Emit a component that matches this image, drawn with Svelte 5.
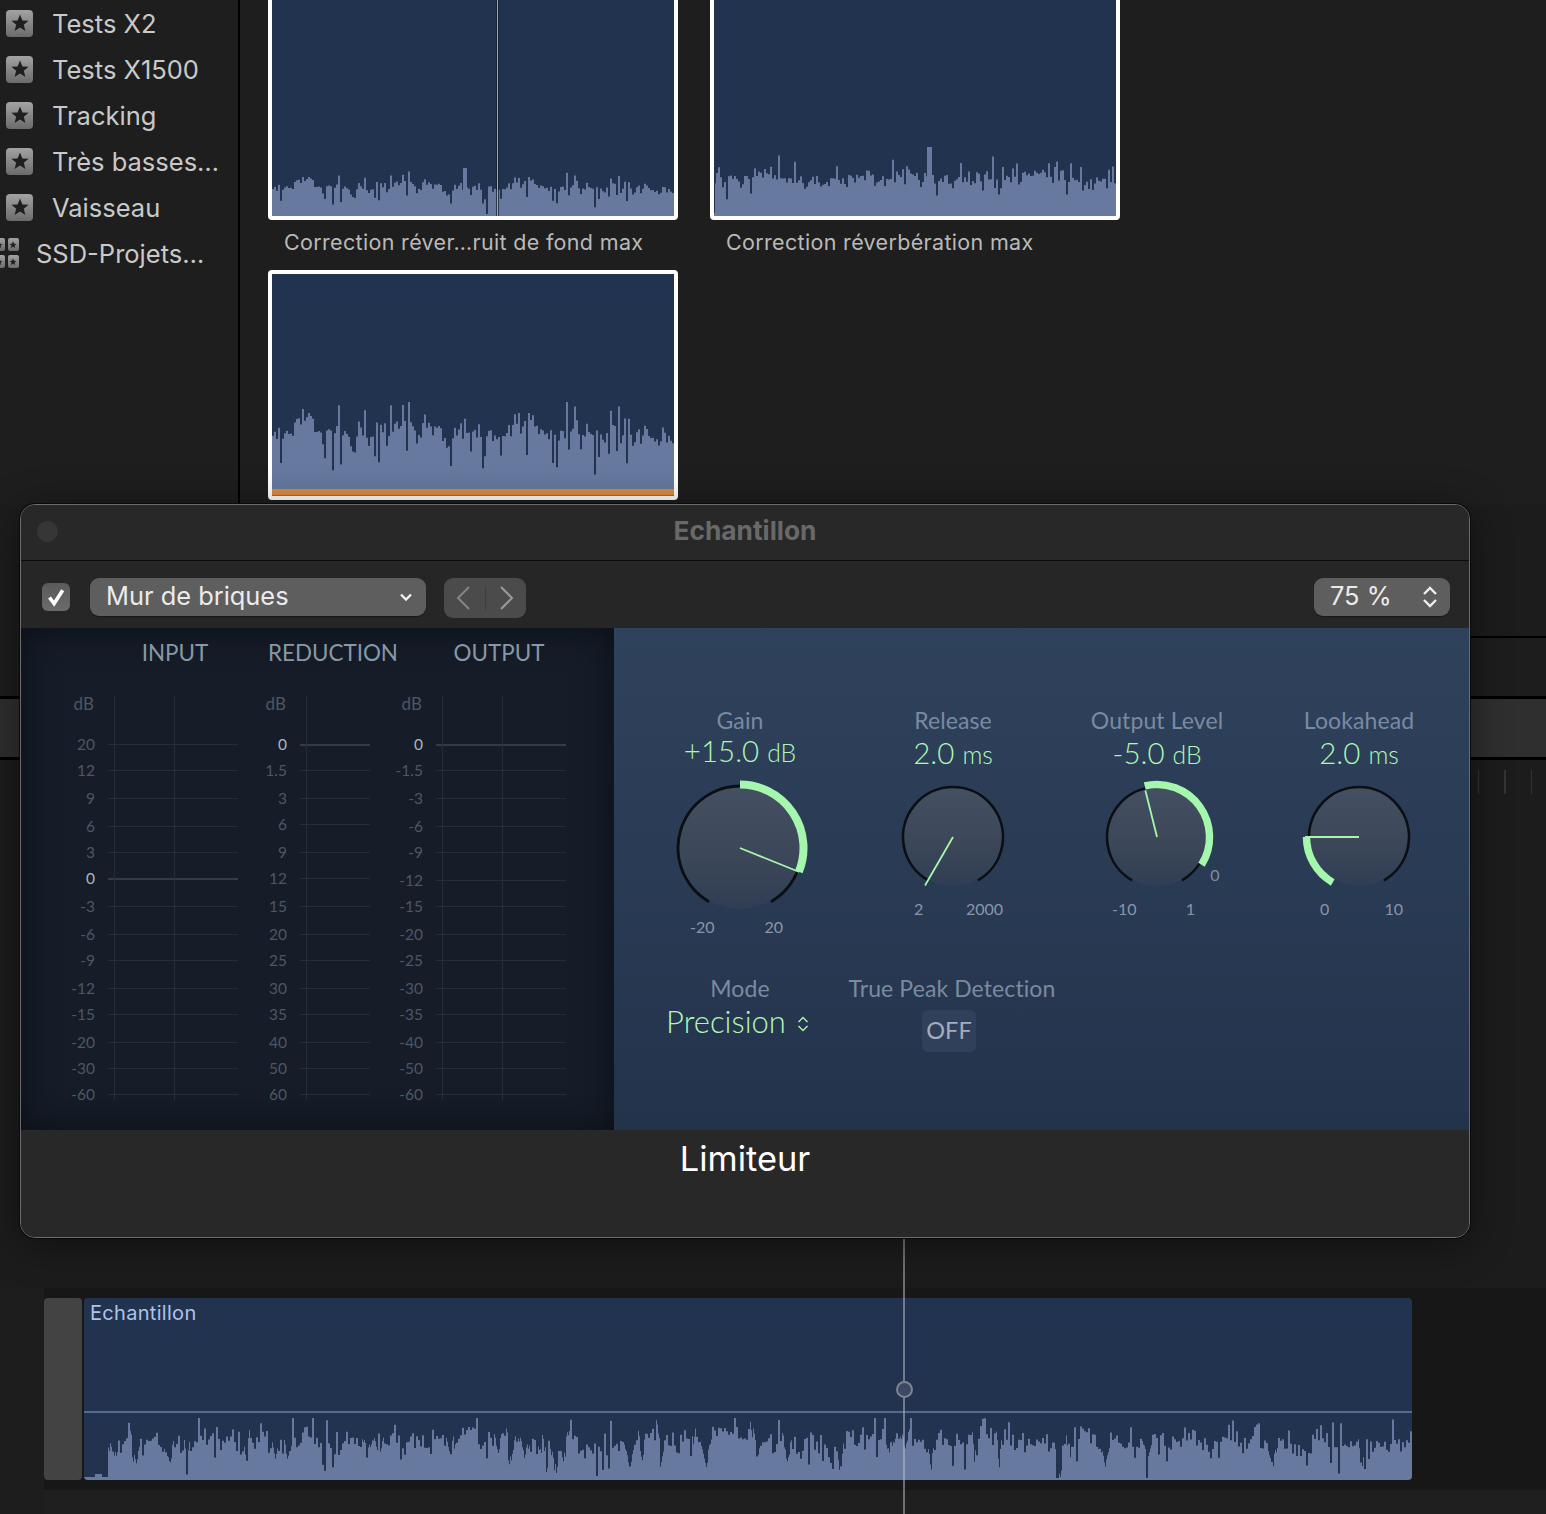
<script lang="ts">
	const sidebarItems = ['Tests X2', 'Tests X1500', 'Tracking', 'Très basses…', 'Vaisseau'];

	// seeded so the waveforms stay the same between runs
	function makeRandom(seed: number) {
		let s = seed;
		return () => {
			s = (s * 16807) % 2147483647;
			return (s - 1) / 2147483646;
		};
	}

	function wave(opts: {
		seed: number;
		w: number;
		h: number;
		mean: number;
		jitter: number;
		peak: number;
		dip: number;
		notch?: number;
		start?: number;
		blocks?: number[][];
		cuts?: number[][];
	}) {
		const rand = makeRandom(opts.seed);
		const start = opts.start ?? 0;
		let d = `M0 ${opts.h}`;
		let drift = 0;
		let body = 0;
		let notchLeft = 0;
		let notchLen = 1;
		let notchDepth = 0;
		for (let x = 0; x < opts.w; x++) {
			if (x % 2 === 0) {
				drift = drift * 0.8 + (rand() - 0.5) * opts.jitter * 0.9;
				body = opts.mean + drift + (rand() - 0.5) * opts.jitter;
				const r = rand();
				if (r < 0.16) body += rand() * opts.peak;
				else if (r < 0.3) body -= rand() * opts.dip;
				if (notchLeft <= 0 && rand() < (opts.notch ?? 0)) {
					notchLen = notchLeft = 4 + Math.floor(rand() * 8);
					notchDepth = opts.dip * (0.5 + rand() * 0.6);
				}
			}
			let v = x < start ? (x > 10 && x < 18 ? 6 : 3) : body;
			if (notchLeft > 0 && x >= start) {
				v -= notchDepth * (1 - Math.abs(notchLeft / notchLen - 0.5) * 2);
				notchLeft--;
			}
			for (const [bx, bw, bh] of opts.blocks ?? []) {
				if (x >= bx && x < bx + bw) v = bh;
			}
			for (const [cx, cw, ch] of opts.cuts ?? []) {
				if (x >= cx && x < cx + cw) v = ch;
			}
			v = Math.max(v, 2);
			d += `L${x} ${opts.h - v}L${x + 1} ${opts.h - v}`;
		}
		return d + `L${opts.w} ${opts.h}Z`;
	}

	const waveOne = wave({ seed: 4711, w: 402, h: 50, mean: 29, jitter: 8, peak: 11, dip: 15, blocks: [[191, 4, 48]], cuts: [[214, 2, 2]] });
	const waveTwo = wave({ seed: 991, w: 402, h: 72, mean: 38, jitter: 9, peak: 20, dip: 16, blocks: [[213, 5, 69]], cuts: [[0, 1, 3]] });
	const waveThree = wave({ seed: 4711, w: 402, h: 94, mean: 64, jitter: 15, peak: 26, dip: 34 });
	const waveClip = wave({ seed: 20231, w: 1328, h: 62, mean: 38, jitter: 14, peak: 19, dip: 24, notch: 0.07, start: 24 });

	const ys = [745, 771, 799, 827, 853, 879, 907, 935, 961, 989, 1015, 1043, 1069, 1095];
	const meters = [
		{
			name: 'INPUT',
			labelW: 73,
			lineW: 130,
			gap: 8,
			nameShift: 4,
			strong: 5,
			labels: ['20', '12', '9', '6', '3', '0', '-3', '-6', '-9', '-12', '-15', '-20', '-30', '-60'],
			ys,
			verticals: [6, 66]
		},
		{
			name: 'REDUCTION',
			labelW: 41,
			lineW: 70,
			gap: 12,
			nameShift: -4,
			strong: 0,
			labels: ['0', '1.5', '3', '6', '9', '12', '15', '20', '25', '30', '35', '40', '50', '60'],
			ys: ys.map((y, i) => (i === 3 ? 825 : y)),
			verticals: [6]
		},
		{
			name: 'OUTPUT',
			labelW: 41,
			lineW: 130,
			gap: 0,
			nameShift: -4,
			strong: 0,
			labels: ['0', '-1.5', '-3', '-6', '-9', '-12', '-15', '-20', '-25', '-30', '-35', '-40', '-50', '-60'],
			ys: ys.map((y, i) => (i === 5 ? 881 : y)),
			verticals: [6, 66]
		}
	];

	const knobs = [
		{ title: 'Gain', value: '+15.0', unit: 'dB', r: 62, ring: 2.8, cx: 80, cy: 70, w: 160, h: 140, from: 0, to: 112, pointer: 112, len: 64, arcW: 8, arcR: 63.5, min: '-20', max: '20', pl: 30, pr: 37, ml: 0, lift: 2, after: 8 },
		{ title: 'Release', value: '2.0', unit: 'ms', r: 50, ring: 2.6, cx: 80, cy: 58, w: 160, h: 121, from: 0, to: 0, pointer: -150, len: 56, arcW: 0, arcR: 0, min: '2', max: '2000', pl: 41, pr: 30, ml: 53, lift: 0, after: 7 },
		{ title: 'Output Level', value: '-5.0', unit: 'dB', r: 50, ring: 2.6, cx: 80, cy: 58, w: 160, h: 121, from: -13.5, to: 122, pointer: -14, len: 48, arcW: 7.5, arcR: 52.5, min: '-10', max: '1', pl: 35, pr: 42, ml: 44, lift: 0, after: 7 },
		{ title: 'Lookahead', value: '2.0', unit: 'ms', r: 50, ring: 2.6, cx: 80, cy: 58, w: 160, h: 121, from: -150, to: -90, pointer: -90, len: 54, arcW: 7.5, arcR: 52.5, min: '0', max: '10', pl: 41, pr: 36, ml: 42, lift: 0, after: 7 }
	];

	function polar(cx: number, cy: number, r: number, deg: number) {
		const a = ((deg - 90) * Math.PI) / 180;
		return [cx + r * Math.cos(a), cy + r * Math.sin(a)];
	}

	function arc(cx: number, cy: number, r: number, from: number, to: number) {
		const [x1, y1] = polar(cx, cy, r, from);
		const [x2, y2] = polar(cx, cy, r, to);
		const large = to - from > 180 ? 1 : 0;
		return `M${x1} ${y1}A${r} ${r} 0 ${large} 1 ${x2} ${y2}`;
	}
</script>

{#snippet star()}
	<svg class="star" viewBox="0 0 20 20">
		<polygon points="10,1.5 12.4,7.4 18.6,7.8 13.8,11.8 15.4,18 10,14.6 4.6,18 6.2,11.8 1.4,7.8 7.6,7.4" />
	</svg>
{/snippet}

<div class="app">
	<section class="browser">
		<nav class="sidebar">
			{#each sidebarItems as item}
				<div class="side-row">
					<span class="chip">{@render star()}</span>
					<span>{item}</span>
				</div>
			{/each}
			<div class="side-row library">
				<span class="chip-group">
					{#each [0, 1, 2, 3] as i (i)}
						<span class="chip small">{@render star()}</span>
					{/each}
				</span>
				<span>SSD-Projets…</span>
			</div>
		</nav>
		<div class="thumbs">
			<figure class="thumb">
				<div class="thumb-frame">
					<span class="frame-playhead"></span>
					<svg class="wave" width="402" height="50"><path d={waveOne} /></svg>
				</div>
				<figcaption>Correction réver…ruit de fond max</figcaption>
			</figure>
			<figure class="thumb">
				<div class="thumb-frame">
					<svg class="wave" width="402" height="72"><path d={waveTwo} /></svg>
				</div>
				<figcaption>Correction réverbération max</figcaption>
			</figure>
			<figure class="thumb">
				<div class="thumb-frame">
					<svg class="wave" width="402" height="94"><path d={waveThree} /></svg>
					<span class="orange-bar"></span>
				</div>
			</figure>
		</div>
	</section>

	<section class="lanes">
		<div class="lane-head"></div>
		<div class="lane-band"></div>
		<div class="lane-ruler">
			<i></i><i></i><i></i>
		</div>
	</section>

	<section class="track">
		<div class="clip-handle"></div>
		<div class="clip">
			<span class="clip-name">Echantillon</span>
			<span class="clip-level"></span>
			<svg class="wave" width="1328" height="62"><path d={waveClip} /></svg>
		</div>
	</section>
	<div class="track-foot"></div>

	<div class="playhead"><span></span></div>

	<div class="window">
		<header class="titlebar">
			<span class="close-dot"></span>
			<span class="title">Echantillon</span>
		</header>

		<div class="toolbar">
			<span class="checkbox">
				<svg viewBox="0 0 28 28" width="28" height="28">
					<path d="M7.5 14.5l4.6 6.2 8.6-13.4" fill="none" stroke="#fff" stroke-width="3.6" />
				</svg>
			</span>
			<div class="select preset">
				<span>Mur de briques</span>
				<svg viewBox="0 0 16 16" width="16" height="16">
					<path d="M3 5.5l5 5 5-5" fill="none" stroke="#eee" stroke-width="2.4" />
				</svg>
			</div>
			<div class="nav-buttons">
				<svg viewBox="0 0 20 28" width="20" height="28">
					<path d="M16 3L5 14l11 11" fill="none" stroke="#858585" stroke-width="2" />
				</svg>
				<span class="nav-sep"></span>
				<svg viewBox="0 0 20 28" width="20" height="28">
					<path d="M4 3l11 11L4 25" fill="none" stroke="#9a9a9a" stroke-width="2" />
				</svg>
			</div>
			<div class="select zoom">
				<span>75 %</span>
				<svg viewBox="0 0 18 28" width="18" height="28">
					<path d="M3 11l6-6 6 6M3 17l6 6 6-6" fill="none" stroke="#eee" stroke-width="2.4" />
				</svg>
			</div>
		</div>

		<div class="plugin">
			<div class="meters">
				{#each meters as m}
					<div class="meter" style="margin-right:{m.gap}px">
						<div class="meter-name" style="padding-left:{m.labelW + 13 + m.nameShift}px;width:{m.lineW - m.nameShift}px">{m.name}</div>
						<div class="scale">
							{#each m.verticals as v}
								<span class="vertical" style="left:{m.labelW + 13 + v}px"></span>
							{/each}
							<div class="tick" style="height:41px">
								<span class="tick-label db" style="width:{m.labelW - 1}px">dB</span>
							</div>
							{#each m.labels as label, i}
								<div class="tick" style="height:{i < 13 ? m.ys[i + 1] - m.ys[i] : 12}px">
									<span class="tick-label" class:strong={i === m.strong} style="width:{m.labelW}px">{label}</span>
									<span class="tick-line" class:strong={i === m.strong} style="width:{m.lineW}px"></span>
								</div>
							{/each}
						</div>
					</div>
				{/each}
			</div>

			<div class="controls">
				<div class="knob-row">
					{#each knobs as k, i}
						<div class="knob" style="margin-left:{k.ml}px">
							<div class="knob-title">{k.title}</div>
							<div class="knob-value" style="margin-top:{-k.lift}px;margin-bottom:{k.after}px">{k.value} <small>{k.unit}</small></div>
							<svg class="dial" width={k.w} height={k.h}>
								<defs>
									<linearGradient id="disc-{i}" x1="0" y1="0" x2="0" y2="1">
										<stop offset="0" stop-color="#444f61" />
										<stop offset="0.6" stop-color="#3b4658" />
										<stop offset="1" stop-color="#303d54" />
									</linearGradient>
								</defs>
								<circle cx={k.cx} cy={k.cy} r={k.r - 1} fill="url(#disc-{i})" />
								<path d={arc(k.cx, k.cy, k.r, -150, 150)} fill="none" stroke="#0b0e13" stroke-width={k.ring} />
								{#if k.arcW}
									<path d={arc(k.cx, k.cy, k.arcR, k.from, k.to)} fill="none" stroke="#a6f7ae" stroke-width={k.arcW} />
								{/if}
								<line
									x1={k.cx}
									y1={k.cy}
									x2={polar(k.cx, k.cy, k.len, k.pointer)[0]}
									y2={polar(k.cx, k.cy, k.len, k.pointer)[1]}
									stroke="#a6f7ae"
									stroke-width="1.8"
								/>
								{#if k.title === 'Output Level'}
									<text x={k.cx + 58} y={k.cy + 44} text-anchor="middle" class="knob-zero">0</text>
								{/if}
							</svg>
							<div class="limits" style="padding-left:{k.pl}px;padding-right:{k.pr}px">
								<span>{k.min}</span>
								<span>{k.max}</span>
							</div>
						</div>
					{/each}
				</div>

				<div class="option-row">
					<div class="option mode">
						<div class="knob-title">Mode</div>
						<div class="mode-value">
							<span>Precision</span>
							<svg viewBox="0 0 14 20" width="14" height="20">
								<path d="M2.5 8l4.5-4.5L11.500 8M2.500 12l4.500 4.500 4.500-4.500" fill="none" stroke="#a6f7ae" stroke-width="1.4" />
							</svg>
						</div>
					</div>
					<div class="option peak">
						<div class="knob-title">True Peak Detection</div>
						<div class="off-button">OFF</div>
					</div>
				</div>
			</div>
		</div>

		<footer class="plugin-name">Limiteur</footer>
	</div>
</div>

<style>
	:global(body) {
		margin: 0;
		background: #1d1d1d;
	}

	.app {
		position: relative;
		width: 1546px;
		height: 1514px;
		overflow: hidden;
		display: flex;
		flex-direction: column;
		background: #1d1d1d;
		font-family: Inter, 'Liberation Sans', sans-serif;
	}

	.browser {
		display: flex;
		height: 505px;
		flex: none;
		overflow: hidden;
		background: #1e1e1e;
	}

	.sidebar {
		width: 238px;
		flex: none;
		border-right: 2px solid #000;
		color: #c9c9c9;
		font-size: 25.500px;
	}

	.side-row {
		display: flex;
		align-items: center;
		gap: 19px;
		height: 46px;
		padding-left: 6px;
		white-space: nowrap;
	}

	.chip {
		display: flex;
		align-items: center;
		justify-content: center;
		width: 27px;
		height: 27px;
		border-radius: 4px;
		background: linear-gradient(#a3a3a3, #6b6b6b);
	}

	.chip.small {
		width: 11px;
		height: 13px;
		border-radius: 2px;
	}

	.chip-group {
		display: grid;
		grid-template-columns: 11px 11px;
		gap: 4px 3px;
	}

	.library {
		padding-left: 0;
		margin-left: -6px;
		gap: 17px;
	}

	.star {
		width: 74%;
		height: 74%;
		fill: #1f1f1f;
	}

	.thumbs {
		display: grid;
		grid-template-columns: 410px 410px;
		grid-auto-rows: 230px;
		gap: 50px 32px;
		margin: -10px 0 0 28px;
	}

	.thumb {
		margin: 0;
		position: relative;
	}

	.thumb-frame {
		position: relative;
		box-sizing: border-box;
		height: 230px;
		display: flex;
		flex-direction: column;
		justify-content: flex-end;
		border: 4px solid #fff;
		border-radius: 4px;
		background: #22334f;
		overflow: hidden;
	}

	.thumb figcaption {
		padding-left: 16px;
		height: 50px;
		line-height: 45px;
		color: #b9b9b9;
		font-size: 21.500px;
		letter-spacing: 0.33px;
		white-space: nowrap;
	}

	.wave {
		display: block;
		flex: none;
		fill: #67799f;
	}

	.frame-playhead {
		position: absolute;
		left: 225px;
		top: 0;
		bottom: 0;
		width: 1px;
		background: #9aa4b8;
		box-shadow: 0 0 0 1px rgba(20, 28, 44, 0.7);
	}

	.orange-bar {
		position: absolute;
		left: 0;
		right: 0;
		bottom: 1px;
		height: 6px;
		border-radius: 1px;
		background: #e08b3e;
	}

	.lanes {
		flex: none;
		height: 783px;
		display: flex;
		flex-direction: column;
	}

	.lane-head {
		flex: none;
		height: 131px;
		margin-left: 900px;
		border-bottom: 2px solid #000;
		background: #1c1c1c;
	}

	.lane-band {
		flex: none;
		margin-top: 58px;
		height: 58px;
		border-top: 3px solid #000;
		border-bottom: 3px solid #000;
		background: #2f2f2f;
	}

	.lane-ruler {
		flex: 1;
		background: #1c1c1c;
		display: flex;
		justify-content: flex-end;
		gap: 25px;
		padding: 10px 14px 0 0;
	}

	.lane-ruler i {
		width: 1.500px;
		height: 24px;
		background: #333;
	}

	.track {
		flex: none;
		display: flex;
		align-items: flex-start;
		gap: 2px;
		height: 202px;
		margin-left: 44px;
		padding-top: 10px;
		box-sizing: border-box;
		background: #171717;
	}

	.clip-handle {
		width: 38px;
		height: 182px;
		border-radius: 4px;
		background: #434343;
	}

	.clip {
		position: relative;
		width: 1328px;
		height: 182px;
		display: flex;
		flex-direction: column;
		justify-content: flex-end;
		border-radius: 4px;
		background: #22334f;
		overflow: hidden;
	}

	.clip-name {
		position: absolute;
		left: 6px;
		top: 3px;
		color: #adc3ea;
		font-size: 20px;
		letter-spacing: 0.3px;
	}

	.clip-level {
		position: absolute;
		left: 0;
		right: 0;
		top: 113px;
		height: 2px;
		background: #56698f;
	}

	.track-foot {
		flex: 1;
		margin-left: 44px;
		background: #1f1f1f;
	}

	.playhead {
		position: absolute;
		left: 903px;
		top: 1238px;
		bottom: 0;
		width: 2px;
		background: rgba(190, 196, 210, 0.5);
	}

	.playhead span {
		position: absolute;
		left: -7.500px;
		top: 143px;
		width: 13px;
		height: 13px;
		border: 2px solid #7d8494;
		border-radius: 50%;
		background: #3e4860;
	}

	.window {
		position: absolute;
		left: 20px;
		top: 504px;
		width: 1450px;
		height: 734px;
		box-sizing: border-box;
		display: flex;
		flex-direction: column;
		border: 1px solid #6c6c6c;
		border-radius: 15px;
		overflow: hidden;
		background: #272727;
		box-shadow: 0 0 0 1px #0a0a0a, 0 6px 40px rgba(0, 0, 0, 0.45);
	}

	.titlebar {
		flex: none;
		position: relative;
		height: 55px;
		padding-bottom: 5px;
		box-sizing: border-box;
		display: flex;
		align-items: center;
		justify-content: center;
		background: #282828;
	}

	.close-dot {
		position: absolute;
		left: 16px;
		top: 16px;
		width: 21px;
		height: 21px;
		border-radius: 50%;
		background: #363636;
	}

	.title {
		color: #696969;
		font-size: 26.300px;
		font-weight: 700;
	}

	.toolbar {
		flex: none;
		height: 68px;
		box-sizing: border-box;
		display: flex;
		align-items: flex-start;
		padding: 17px 19px 0 21px;
		background: #262626;
		border-top: 1px solid #0b0b0b;
	}

	.checkbox {
		width: 28px;
		height: 28px;
		margin: 5px 20px 0 0;
		border-radius: 6px;
		background: linear-gradient(#5a5a5a, #6b6b6b);
	}

	.select {
		height: 38px;
		box-sizing: border-box;
		display: flex;
		align-items: center;
		justify-content: space-between;
		border-radius: 9px;
		background: #5e5e5e;
		box-shadow: 0 1px 1px rgba(0, 0, 0, 0.4);
		color: #ebebeb;
		font-size: 25.400px;
	}

	.select span {
		margin-top: -3px;
	}

	.preset {
		width: 336px;
		padding: 0 12px 0 16px;
	}

	.zoom {
		width: 136px;
		margin-left: auto;
		padding: 0 11px 0 16px;
	}

	.nav-buttons {
		width: 82px;
		height: 40px;
		margin-left: 18px;
		display: flex;
		align-items: center;
		justify-content: space-between;
		padding: 0 9px;
		box-sizing: border-box;
		border-radius: 9px;
		background: #4b4b4b;
	}

	.nav-sep {
		width: 1px;
		height: 24px;
		background: #3e3e3e;
	}

	.plugin {
		flex: none;
		height: 502px;
		display: flex;
		font-family: Lato, 'Open Sans', sans-serif;
	}

	.meters {
		width: 593px;
		box-sizing: border-box;
		padding-left: 1px;
		flex: none;
		display: flex;
		background: #161d28;
		box-shadow: inset 0 0 36px #0a0e16;
	}

	.meter {
		flex: none;
		display: flex;
		flex-direction: column;
	}

	.meter-name {
		height: 75px;
		display: flex;
		justify-content: center;
		line-height: 50px;
		color: #8798a6;
		font-size: 22.400px;
		white-space: nowrap;
	}

	.scale {
		position: relative;
	}

	.vertical {
		position: absolute;
		top: -7px;
		height: 404px;
		width: 1px;
		background: #252d39;
	}

	.tick {
		display: flex;
		align-items: flex-start;
		gap: 13px;
	}

	.tick-label {
		flex: none;
		height: 20px;
		line-height: 20px;
		margin-top: -10px;
		text-align: right;
		color: #4d5764;
		font-size: 15.500px;
	}

	.tick-label.db {
		margin-top: -9px;
		font-size: 17px;
	}

	.tick-label.strong {
		color: #a9b7c0;
	}

	.tick-line {
		flex: none;
		height: 1px;
		background: #252d39;
	}

	.tick-line.strong {
		height: 2px;
		background: #333b47;
	}

	.controls {
		flex: 1;
		padding: 78px 0 0 46px;
		background: linear-gradient(#2f425c, #24334c);
	}

	.knob-row {
		display: flex;
		align-items: flex-start;
		height: 230px;
	}

	.knob {
		width: 160px;
		flex: none;
	}

	.knob-title {
		height: 30px;
		line-height: 28px;
		text-align: center;
		color: #7a8aa1;
		font-size: 23px;
		letter-spacing: 0.1px;
		white-space: nowrap;
	}

	.knob-value {
		height: 36px;
		line-height: 34px;
		text-align: center;
		color: #aef8b6;
		font-size: 29.500px;
		font-weight: 300;
		white-space: nowrap;
	}

	.knob-value small {
		font-size: 24.700px;
	}

	.dial {
		display: block;
		overflow: visible;
	}

	.knob-zero {
		fill: #7f8c9f;
		font-size: 16px;
	}

	.limits {
		display: flex;
		justify-content: space-between;
		height: 18px;
		line-height: 18px;
		color: #8a96a8;
		font-size: 16px;
	}

	.option-row {
		display: flex;
		margin-top: 38px;
	}

	.option.mode {
		width: 160px;
	}

	.option.peak {
		width: 210px;
		margin-left: 27px;
	}

	.mode-value {
		display: flex;
		align-items: center;
		justify-content: center;
		gap: 10px;
		height: 34px;
		padding-right: 4px;
		color: #aef8b6;
		font-size: 31px;
		font-weight: 300;
	}

	.mode-value svg {
		margin-top: 6px;
	}

	.off-button {
		width: 54px;
		height: 42px;
		margin: 6px 0 0 75px;
		line-height: 40px;
		text-align: center;
		border-radius: 6px;
		background: #30405a;
		color: #a3adbb;
		font-size: 23.500px;
	}

	.plugin-name {
		flex: 1;
		text-align: center;
		line-height: 58px;
		color: #fff;
		font-size: 34.400px;
		background: #282828;
	}
</style>
